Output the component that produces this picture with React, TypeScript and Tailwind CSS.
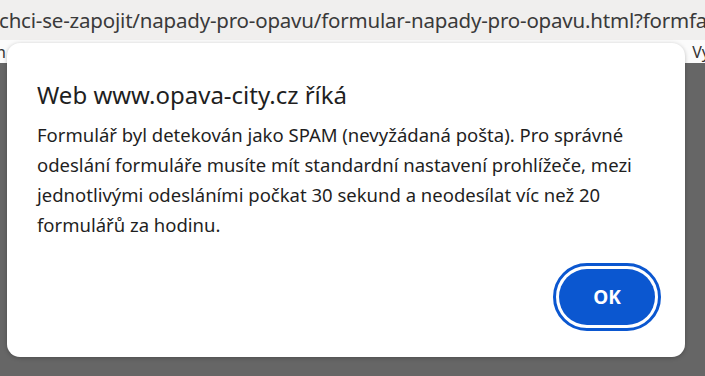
export default function App() {
  return (
    <div
      className="relative w-[705px] h-[376px] overflow-hidden flex flex-col bg-white"
      style={{ fontFamily: '"Noto Sans", "Open Sans", sans-serif' }}
    >
      {/* address bar */}
      <div className="h-[40px] shrink-0 bg-[#f0efee] flex items-center overflow-hidden whitespace-nowrap">
        <span className="text-[20.5px] tracking-[-0.2px] text-[#3a3a3a] -ml-[1px]">
          chci-se-zapojit/napady-pro-opavu/formular-napady-pro-opavu.html?formfa
        </span>
      </div>

      {/* page behind the dialog */}
      <div className="h-[23px] shrink-0 bg-[#fbfbfb] flex items-center justify-between text-[16px] text-[#333] overflow-hidden whitespace-nowrap">
        <span className="-ml-[4px]">n</span>
        <span className="-mr-[5px]">Vy</span>
      </div>
      <div className="flex-1 bg-[#666666]" />

      {/* alert dialog */}
      <div className="absolute left-[7px] top-[43px] w-[678px] h-[314px] rounded-[13px] bg-white shadow-[0_1px_4px_rgba(0,0,0,0.25)] pt-[37px] px-[30px] flex flex-col">
        <h1 className="text-[24px] leading-[30px] text-[#1f1f1f]">Web www.opava-city.cz říká</h1>
        <p className="mt-[10px] text-[18.5px] leading-[30px] text-[#1f1f1f] whitespace-nowrap">
          Formulář byl detekován jako SPAM (nevyžádaná pošta). Pro správné
          <br />
          odeslání formuláře musíte mít standardní nastavení prohlížeče, mezi
          <br />
          jednotlivými odesláními počkat 30 sekund a neodesílat víc než 20
          <br />
          formulářů za hodinu.
        </p>
        <div className="mt-[23px] flex justify-end -mr-[6px]">
          <button className="w-[108px] h-[68px] rounded-full border-[3px] border-[#0b57d0] p-[3px] bg-white">
            <span className="flex w-full h-full items-center justify-center rounded-full bg-[#0b57d0] text-white text-[19px] font-bold">
              OK
            </span>
          </button>
        </div>
      </div>
    </div>
  );
}
